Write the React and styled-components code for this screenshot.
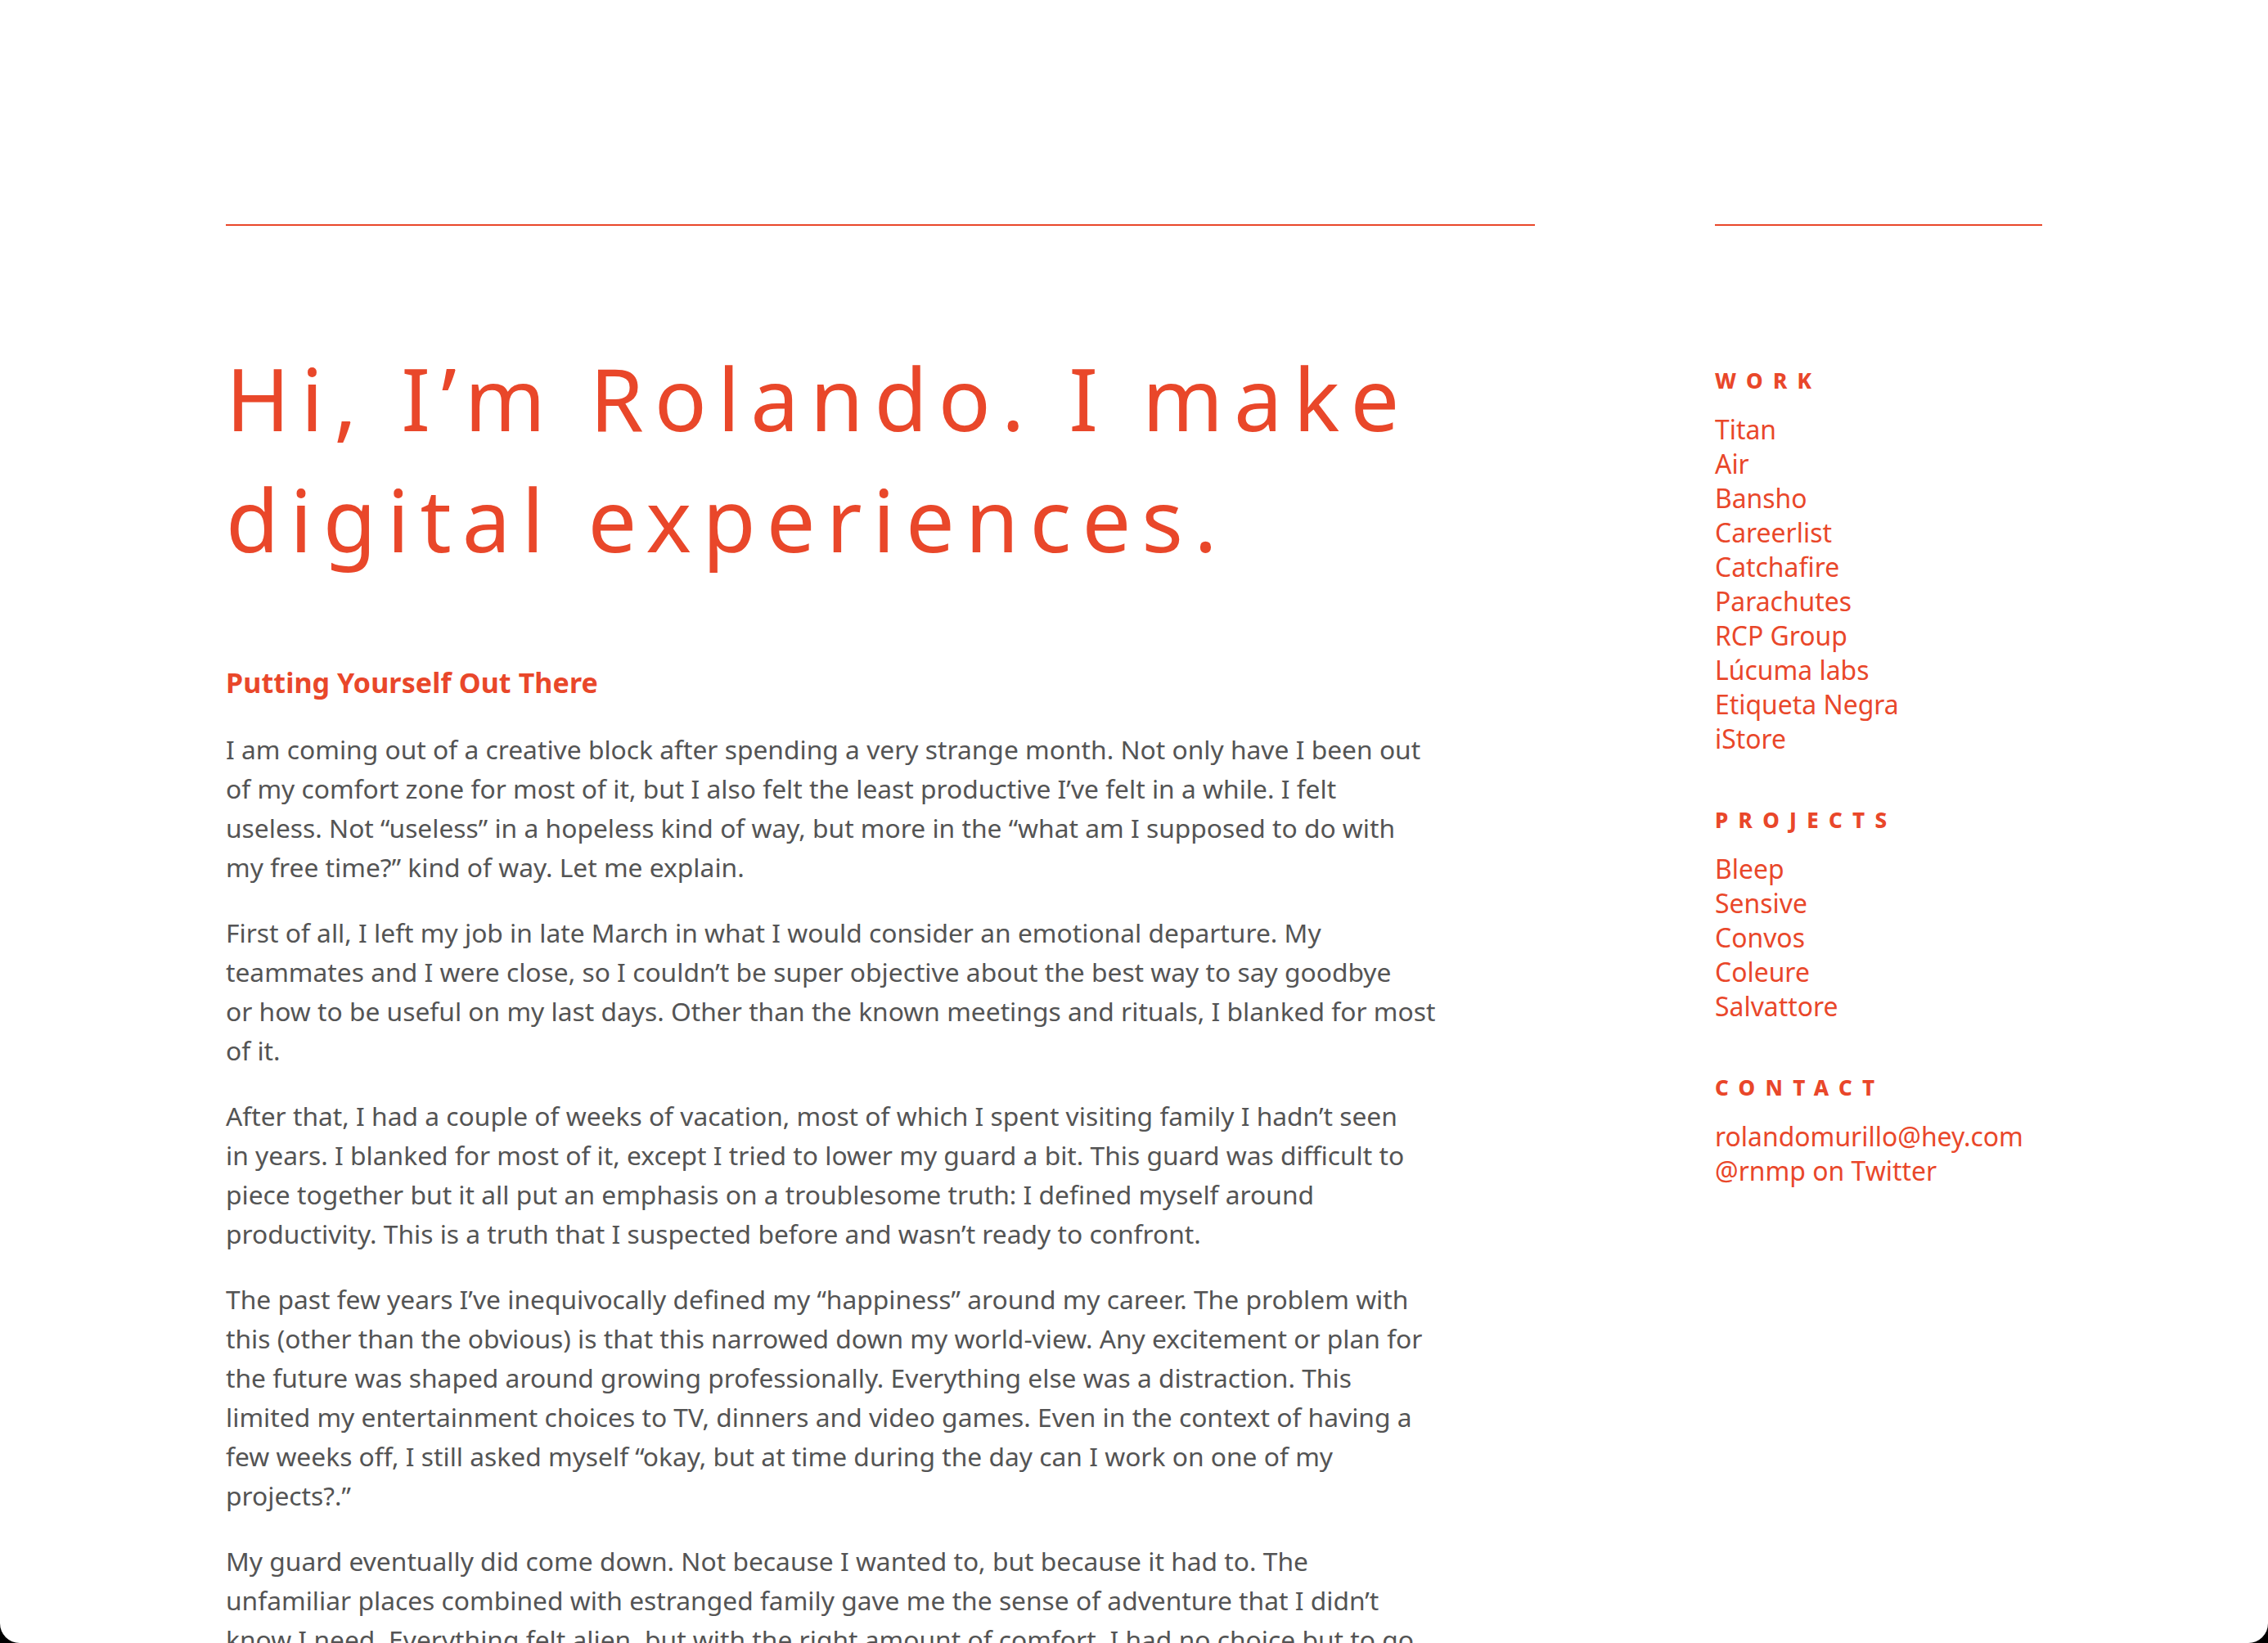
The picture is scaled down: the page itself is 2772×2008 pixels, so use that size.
import React from "react";
import styled, { createGlobalStyle } from "styled-components";

const ORANGE = "#E9472A";
const TEXT = "#545454";

const GlobalStyle = createGlobalStyle`
  html, body {
    margin: 0;
    padding: 0;
    background: #000;
  }
  body {
    font-family: "Noto Sans", "Liberation Sans", sans-serif;
    -webkit-font-smoothing: antialiased;
  }
  * { box-sizing: border-box; }
`;

const Frame = styled.div`
  background: #fff;
  height: 100vh;
  overflow: hidden;
  border-radius: 0 0 24px 24px;
`;

const Layout = styled.div`
  width: 2220px;
  margin: 0 auto;
  padding-top: 274px;
  display: grid;
  grid-template-columns: 1600px 400px;
  column-gap: 220px;
  align-items: start;
`;

const Main = styled.main`
  border-top: 2px solid ${ORANGE};
  padding-top: 136px;
`;

const Title = styled.h1`
  margin: 0;
  color: ${ORANGE};
  font-size: 106px;
  line-height: 148px;
  font-weight: 400;
  letter-spacing: 13.1px;
`;

const Article = styled.article`
  margin-top: 106px;
  max-width: 1500px;
`;

const ArticleTitle = styled.h2`
  margin: 0 0 37px;
  color: ${ORANGE};
  font-size: 34px;
  line-height: 41px;
  font-weight: 700;
  letter-spacing: 0.1px;
`;

const Paragraph = styled.p`
  margin: 0 0 32px;
  color: ${TEXT};
  font-size: 31.75px;
  line-height: 48px;
  font-weight: 400;
`;

const Line = styled.span`
  display: block;
  white-space: nowrap;
`;

const Sidebar = styled.aside`
  border-top: 2px solid ${ORANGE};
  padding-top: 176px;
  display: flex;
  flex-direction: column;
  gap: 65px;
`;

const Section = styled.section`
  display: flex;
  flex-direction: column;
  gap: 26px;
`;

const SectionLabel = styled.h3`
  margin: 0;
  color: ${ORANGE};
  font-size: 26px;
  line-height: 26px;
  font-weight: 800;
  letter-spacing: 12.3px;
  text-transform: uppercase;
`;

const LinkList = styled.ul`
  list-style: none;
  margin: 0;
  padding: 0;
`;

const LinkItem = styled.li`
  font-size: 31.9px;
  line-height: 42px;
`;

const NavLink = styled.a`
  color: ${ORANGE};
  text-decoration: none;
`;

const sections = [
  {
    label: "Work",
    links: [
      "Titan",
      "Air",
      "Bansho",
      "Careerlist",
      "Catchafire",
      "Parachutes",
      "RCP Group",
      "Lúcuma labs",
      "Etiqueta Negra",
      "iStore",
    ],
  },
  {
    label: "Projects",
    links: ["Bleep", "Sensive", "Convos", "Coleure", "Salvattore"],
  },
  {
    label: "Contact",
    links: ["rolandomurillo@hey.com", "@rnmp on Twitter"],
  },
];

const paragraphs = [
  [
    "I am coming out of a creative block after spending a very strange month. Not only have I been out",
    "of my comfort zone for most of it, but I also felt the least productive I’ve felt in a while. I felt",
    "useless. Not “useless” in a hopeless kind of way, but more in the “what am I supposed to do with",
    "my free time?” kind of way. Let me explain.",
  ],
  [
    "First of all, I left my job in late March in what I would consider an emotional departure. My",
    "teammates and I were close, so I couldn’t be super objective about the best way to say goodbye",
    "or how to be useful on my last days. Other than the known meetings and rituals, I blanked for most",
    "of it.",
  ],
  [
    "After that, I had a couple of weeks of vacation, most of which I spent visiting family I hadn’t seen",
    "in years. I blanked for most of it, except I tried to lower my guard a bit. This guard was difficult to",
    "piece together but it all put an emphasis on a troublesome truth: I defined myself around",
    "productivity. This is a truth that I suspected before and wasn’t ready to confront.",
  ],
  [
    "The past few years I’ve inequivocally defined my “happiness” around my career. The problem with",
    "this (other than the obvious) is that this narrowed down my world-view. Any excitement or plan for",
    "the future was shaped around growing professionally. Everything else was a distraction. This",
    "limited my entertainment choices to TV, dinners and video games. Even in the context of having a",
    "few weeks off, I still asked myself “okay, but at time during the day can I work on one of my",
    "projects?.”",
  ],
  [
    "My guard eventually did come down. Not because I wanted to, but because it had to. The",
    "unfamiliar places combined with estranged family gave me the sense of adventure that I didn’t",
    "know I need. Everything felt alien, but with the right amount of comfort. I had no choice but to go",
    "with it and let things happen.",
  ],
];

export default function App() {
  return (
    <Frame>
      <GlobalStyle />
      <Layout>
        <Main>
          <Title>Hi, I’m Rolando. I make digital experiences.</Title>
          <Article>
            <ArticleTitle>Putting Yourself Out There</ArticleTitle>
            {paragraphs.map((lines, i) => (
              <Paragraph key={i}>
                {lines.map((l, j) => (
                  <Line key={j}>{l}</Line>
                ))}
              </Paragraph>
            ))}
          </Article>
        </Main>
        <Sidebar>
          {sections.map((s) => (
            <Section key={s.label}>
              <SectionLabel>{s.label}</SectionLabel>
              <LinkList>
                {s.links.map((l) => (
                  <LinkItem key={l}>
                    <NavLink href="#">{l}</NavLink>
                  </LinkItem>
                ))}
              </LinkList>
            </Section>
          ))}
        </Sidebar>
      </Layout>
    </Frame>
  );
}
